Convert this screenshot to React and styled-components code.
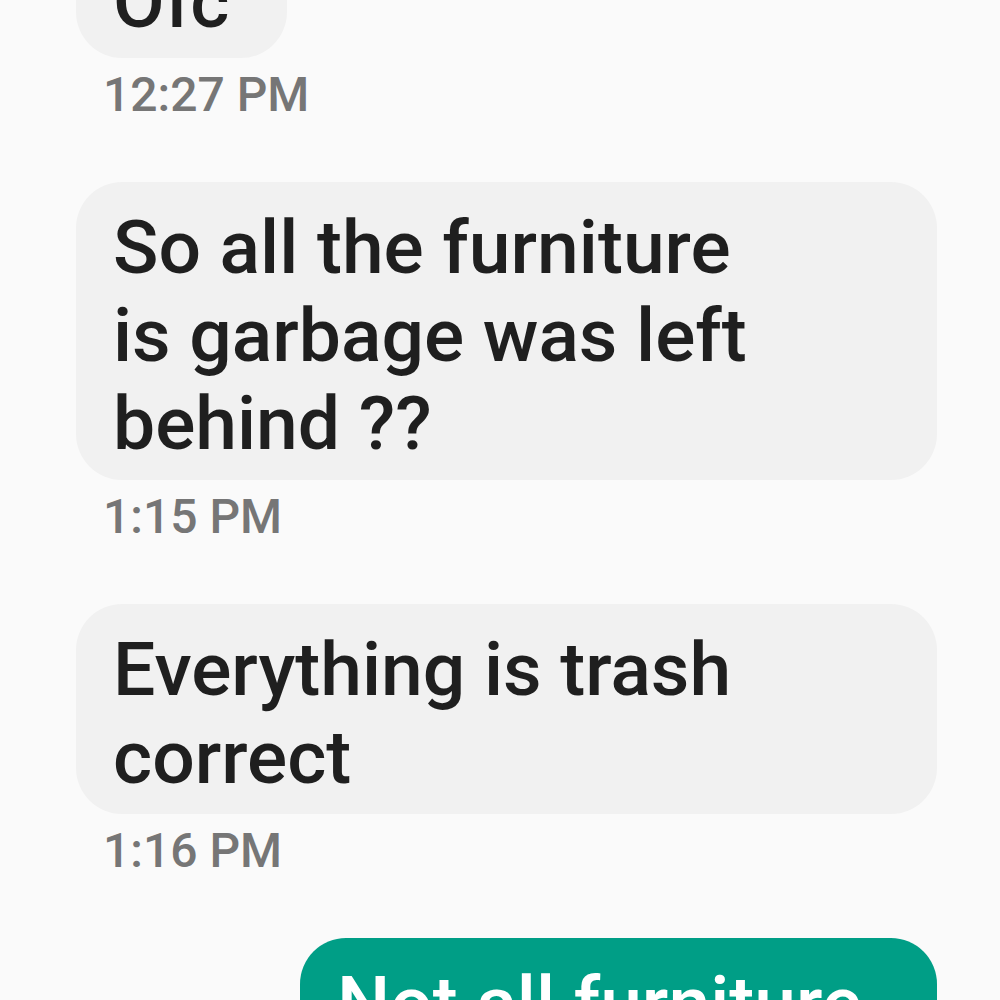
import styled, { createGlobalStyle } from "styled-components";

const GlobalStyle = createGlobalStyle`
  html, body {
    margin: 0;
    padding: 0;
    background: #fafafa;
  }
  body {
    font-family: Roboto, "Noto Sans", "Liberation Sans", sans-serif;
  }
`;

const Screen = styled.div`
  width: 1000px;
  height: 1000px;
  overflow: hidden;
  background: #fafafa;
  box-sizing: border-box;
  padding: 0 63px 0 76px;
  display: flex;
  flex-direction: column;
`;

const Thread = styled.div`
  display: flex;
  flex-direction: column;
  margin-top: -64px;
`;

const Message = styled.div`
  display: flex;
  flex-direction: column;
  align-items: ${(p) => (p.$sent ? "flex-end" : "flex-start")};
  & + & {
    margin-top: 57px;
  }
`;

const Bubble = styled.div`
  box-sizing: border-box;
  width: ${(p) => p.$width || "auto"};
  padding: 21px 36px 13px 37px;
  border-radius: 46px;
  background: ${(p) => (p.$sent ? "#009e86" : "#f1f1f1")};
  color: ${(p) => (p.$sent ? "#ffffff" : "#1f1f1f")};
  font-size: 75px;
  line-height: 88px;
  font-weight: 500;
`;

const Time = styled.div`
  margin-top: 7px;
  padding-left: 27px;
  font-size: 48px;
  line-height: 60px;
  font-weight: 500;
  color: #767676;
`;

const messages = [
  { lines: ["Ofc"], time: "12:27 PM", width: "211px" },
  {
    lines: ["So all the furniture", "is garbage was left", "behind ??"],
    time: "1:15 PM",
    width: "100%",
  },
  { lines: ["Everything is trash", "correct"], time: "1:16 PM", width: "100%" },
  { lines: ["Not all furniture"], sent: true, width: "637px" },
];

export default function App() {
  return (
    <>
      <GlobalStyle />
      <Screen>
        <Thread>
          {messages.map((m, i) => (
            <Message key={i} $sent={m.sent}>
              <Bubble $sent={m.sent} $width={m.width}>
                {m.lines.map((line, j) => (
                  <div key={j}>{line}</div>
                ))}
              </Bubble>
              {m.time && <Time>{m.time}</Time>}
            </Message>
          ))}
        </Thread>
      </Screen>
    </>
  );
}
